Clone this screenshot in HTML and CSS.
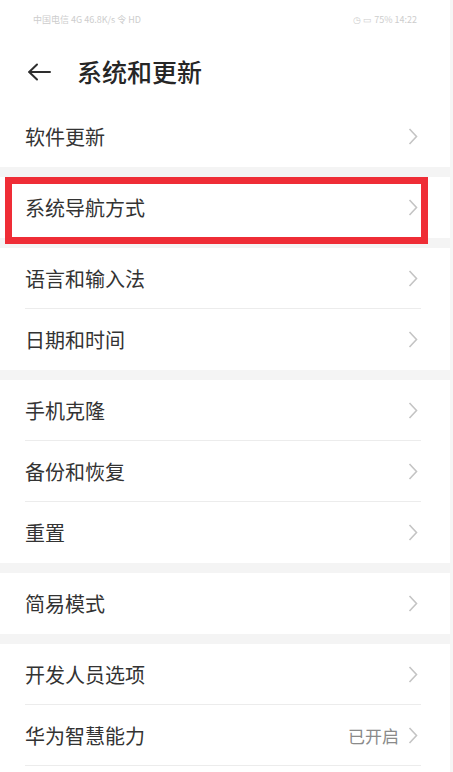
FILE: index.html
```html
<!DOCTYPE html>
<html lang="zh-CN">
<head>
<meta charset="utf-8">
<title>系统和更新</title>
<link rel="stylesheet" href="styles.css">
</head>
<body>
<div class="page">
  <div class="statusbar">
    <span class="sb-text">中国电信 4G 46.8K/s 令 HD</span>
    <span class="sb-text">◷ ▭ 75% 14:22</span>
  </div>
  <header class="header">
    <svg class="back" width="24" height="18" viewBox="0 0 24 18"><path d="M23 9H2M10 1.5L2.2 9 10 16.5" fill="none" stroke="#2e2e2e" stroke-width="2" stroke-linecap="round" stroke-linejoin="round"/></svg>
    <h1 class="title">系统和更新</h1>
  </header>

  <section class="group">
    <div class="row"><span class="label">软件更新</span><span class="right"><svg class="chev" width="10" height="17" viewBox="0 0 10 17"><polyline points="1.5,1 8.5,8.5 1.5,16" fill="none" stroke="#c4c4c4" stroke-width="1.6"/></svg></span></div>
  </section>
  <div class="gap"></div>
  <section class="group">
    <div class="row highlighted"><span class="label">系统导航方式</span><span class="right"><svg class="chev" width="10" height="17" viewBox="0 0 10 17"><polyline points="1.5,1 8.5,8.5 1.5,16" fill="none" stroke="#c4c4c4" stroke-width="1.6"/></svg></span><div class="mark"></div></div>
  </section>
  <div class="gap"></div>
  <section class="group">
    <div class="row line"><span class="label">语言和输入法</span><span class="right"><svg class="chev" width="10" height="17" viewBox="0 0 10 17"><polyline points="1.5,1 8.5,8.5 1.5,16" fill="none" stroke="#c4c4c4" stroke-width="1.6"/></svg></span></div>
    <div class="row"><span class="label">日期和时间</span><span class="right"><svg class="chev" width="10" height="17" viewBox="0 0 10 17"><polyline points="1.5,1 8.5,8.5 1.5,16" fill="none" stroke="#c4c4c4" stroke-width="1.6"/></svg></span></div>
  </section>
  <div class="gap"></div>
  <section class="group">
    <div class="row line"><span class="label">手机克隆</span><span class="right"><svg class="chev" width="10" height="17" viewBox="0 0 10 17"><polyline points="1.5,1 8.5,8.5 1.5,16" fill="none" stroke="#c4c4c4" stroke-width="1.6"/></svg></span></div>
    <div class="row line"><span class="label">备份和恢复</span><span class="right"><svg class="chev" width="10" height="17" viewBox="0 0 10 17"><polyline points="1.5,1 8.5,8.5 1.5,16" fill="none" stroke="#c4c4c4" stroke-width="1.6"/></svg></span></div>
    <div class="row"><span class="label">重置</span><span class="right"><svg class="chev" width="10" height="17" viewBox="0 0 10 17"><polyline points="1.5,1 8.5,8.5 1.5,16" fill="none" stroke="#c4c4c4" stroke-width="1.6"/></svg></span></div>
  </section>
  <div class="gap"></div>
  <section class="group">
    <div class="row"><span class="label">简易模式</span><span class="right"><svg class="chev" width="10" height="17" viewBox="0 0 10 17"><polyline points="1.5,1 8.5,8.5 1.5,16" fill="none" stroke="#c4c4c4" stroke-width="1.6"/></svg></span></div>
  </section>
  <div class="gap"></div>
  <section class="group">
    <div class="row line"><span class="label">开发人员选项</span><span class="right"><svg class="chev" width="10" height="17" viewBox="0 0 10 17"><polyline points="1.5,1 8.5,8.5 1.5,16" fill="none" stroke="#c4c4c4" stroke-width="1.6"/></svg></span></div>
    <div class="row line"><span class="label">华为智慧能力</span><span class="right"><span class="value">已开启</span><svg class="chev" width="10" height="17" viewBox="0 0 10 17"><polyline points="1.5,1 8.5,8.5 1.5,16" fill="none" stroke="#c4c4c4" stroke-width="1.6"/></svg></span></div>
  </section>
</div>
</body>
</html>
```
FILE: styles.css
```css
html, body {
  margin: 0;
  padding: 0;
  background: #f6f6f6;
}
body {
  font-family: "Noto Sans CJK SC", "Noto Sans", sans-serif;
  color: #2f2f2f;
}
.page {
  width: 450px;
  background: #ffffff;
  min-height: 772px;
  overflow: hidden;
}
.statusbar {
  height: 36px;
  display: flex;
  justify-content: space-between;
  align-items: flex-start;
  padding: 0 33px;
}
.sb-text {
  display: block;
  margin-top: 15px;
  font-size: 9px;
  line-height: 10px;
  color: #cdcdcd;
  white-space: nowrap;
}
.header {
  height: 70px;
  display: flex;
  align-items: center;
  padding-left: 27px;
}
.back {
  display: block;
  margin-top: 2px;
}
.title {
  margin: 0 0 0 26px;
  font-size: 25px;
  font-weight: 500;
  color: #262626;
  letter-spacing: 0;
}
.group {
  background: #ffffff;
}
.gap {
  height: 10px;
  background: #f4f4f4;
}
.row {
  position: relative;
  box-sizing: border-box;
  height: 61px;
  margin: 0 29px 0 25px;
  display: flex;
  align-items: center;
  justify-content: space-between;
}
.row.line {
  border-bottom: 1px solid #ececec;
}
.label {
  font-size: 20px;
  color: #333333;
}
.right {
  display: flex;
  align-items: center;
  gap: 9px;
  padding-right: 3px;
}
.value {
  font-size: 17px;
  color: #8a8a8a;
}
.chev {
  display: block;
}
.mark {
  position: absolute;
  left: -20px;
  right: -7px;
  top: 0;
  bottom: -6px;
  border: 7px solid #ef2d36;
  pointer-events: none;
}
```
